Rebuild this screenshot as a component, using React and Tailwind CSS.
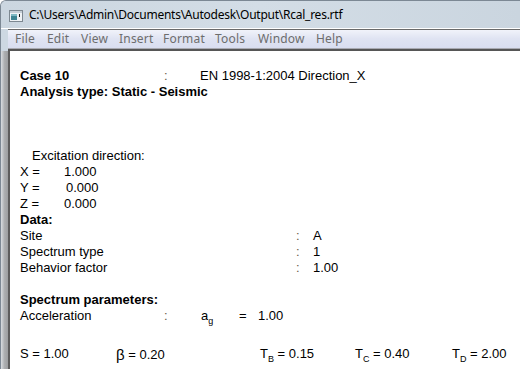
import React from "react";

const Sub = ({ children }) => (
  <span className="relative top-[4px] text-[9px] leading-none">{children}</span>
);

const Line = ({ children, className = "" }) => (
  <div className={"flex h-[16px] items-start whitespace-nowrap leading-[16px] " + className}>{children}</div>
);

const Colon = ({ w }) => (
  <span className={"text-[#6b5a48] " + w}>:</span>
);

export default function App() {
  const menu = [
    ["File", "w-[32px]"],
    ["Edit", "w-[34px]"],
    ["View", "w-[38px]"],
    ["Insert", "w-[44px]"],
    ["Format", "w-[52px]"],
    ["Tools", "w-[43px]"],
    ["Window", "w-[58px]"],
    ["Help", "w-[40px]"],
  ];
  return (
    <div className="flex h-[369px] w-[520px] flex-col overflow-hidden rounded-tl-[6px] border-l border-t border-[#7c8894] bg-[#cdd8e2]">
      {/* title bar */}
      <div className="flex h-[28px] shrink-0 items-center border-b border-white bg-gradient-to-r from-[#cbd6e0] via-[#d3dde6] to-[#cad5df] pl-[8px]">
        <svg width="14" height="12" viewBox="0 0 14 12" className="mr-[6px] mt-[2px]">
          <rect x="0.5" y="0.5" width="13" height="11" fill="#eef2f5" stroke="#7d8891" />
          <rect x="1" y="1" width="12" height="2" fill="#c5ced6" />
          <rect x="2" y="4" width="6" height="6" fill="#3f8593" />
          <rect x="2" y="4" width="6" height="2" fill="#7fb9c4" />
          <rect x="10" y="4" width="1" height="3" fill="#111" />
        </svg>
        <span
          className="text-[12px] leading-none tracking-[-0.25px] text-black"
          style={{ fontFamily: "'Noto Sans', 'Open Sans', sans-serif" }}
        >
          C:\Users\Admin\Documents\Autodesk\Output\Rcal_res.rtf
        </span>
      </div>
      <div className="flex min-h-0 flex-1">
        {/* left frame */}
        <div className="flex w-[7px] shrink-0 flex-col">
          <div className="h-[22px] shrink-0 bg-[#cdd8e2]" />
          <div className="flex-1 bg-gradient-to-r from-[#d9dde1] via-[#acaeb0] to-[#9c9ea0]" />
        </div>
        <div className="flex min-w-0 flex-1 flex-col">
          {/* menu */}
          <div className="h-px shrink-0 bg-[#6a6a6a]" />
          <div
            className="flex h-[18px] shrink-0 items-center bg-gradient-to-b from-[#f1f3fa] via-[#dfe3f2] to-[#d9def0] pl-[7px] text-[12px] tracking-[0.2px] text-[#6d6d6d]"
            style={{ fontFamily: "'Noto Sans', 'Open Sans', sans-serif" }}
          >
            {menu.map(([m, w]) => (
              <span key={m} className={"leading-none " + w}>{m}</span>
            ))}
          </div>
          <div className="h-px shrink-0 bg-[#a9aab2]" />
          <div className="h-[2px] shrink-0 bg-[#565656]" />
          {/* content */}
          <div className="flex min-h-0 flex-1">
            <div className="w-[2px] shrink-0 bg-[#5d5d5d]" />
            <div
              className="min-w-0 flex-1 bg-white pl-[10px] pt-[17px] text-[13px] text-black"
              style={{ fontFamily: "'Liberation Sans', Arial, sans-serif" }}
            >
              <Line className="font-bold">
                <span className="w-[144px]">Case 10</span>
                <span className="w-[36px] font-normal text-[#6b5a48]">:</span>
                <span className="font-normal">EN 1998-1:2004 Direction_X</span>
              </Line>
              <Line className="font-bold">Analysis type: Static - Seismic</Line>
              <Line />
              <Line />
              <Line />
              <Line className="pl-[12px]">Excitation direction:</Line>
              <Line>
                <span className="w-[44px]">X =</span>
                <span>1.000</span>
              </Line>
              <Line>
                <span className="w-[46px]">Y =</span>
                <span>0.000</span>
              </Line>
              <Line>
                <span className="w-[44px]">Z =</span>
                <span>0.000</span>
              </Line>
              <Line className="font-bold">Data:</Line>
              <Line>
                <span className="w-[276px]">Site</span>
                <Colon w="w-[17px]" />
                <span>A</span>
              </Line>
              <Line>
                <span className="w-[276px]">Spectrum type</span>
                <Colon w="w-[17px]" />
                <span>1</span>
              </Line>
              <Line>
                <span className="w-[276px]">Behavior factor</span>
                <Colon w="w-[17px]" />
                <span>1.00</span>
              </Line>
              <Line />
              <Line className="font-bold">Spectrum parameters:</Line>
              <Line>
                <span className="w-[144px]">Acceleration</span>
                <Colon w="w-[37px]" />
                <span className="w-[38px]">
                  a<Sub>g</Sub>
                </span>
                <span className="w-[19px]">=</span>
                <span>1.00</span>
              </Line>
              <div className="h-[22px]" />
              <div className="flex h-[20px] items-start whitespace-nowrap leading-[16px]">
                <span className="w-[96px]">S = 1.00</span>
                <span className="w-[144px]">
                  <span className="relative top-[1px] text-[15px] font-light leading-[16px]">β</span> = 0.20
                </span>
                <span className="w-[95px]">
                  T<Sub>B</Sub> = 0.15
                </span>
                <span className="w-[97px]">
                  T<Sub>C</Sub> = 0.40
                </span>
                <span>
                  T<Sub>D</Sub> = 2.00
                </span>
              </div>
              <Line>Design spectrum calculation</Line>
            </div>
          </div>
        </div>
      </div>
    </div>
  );
}
